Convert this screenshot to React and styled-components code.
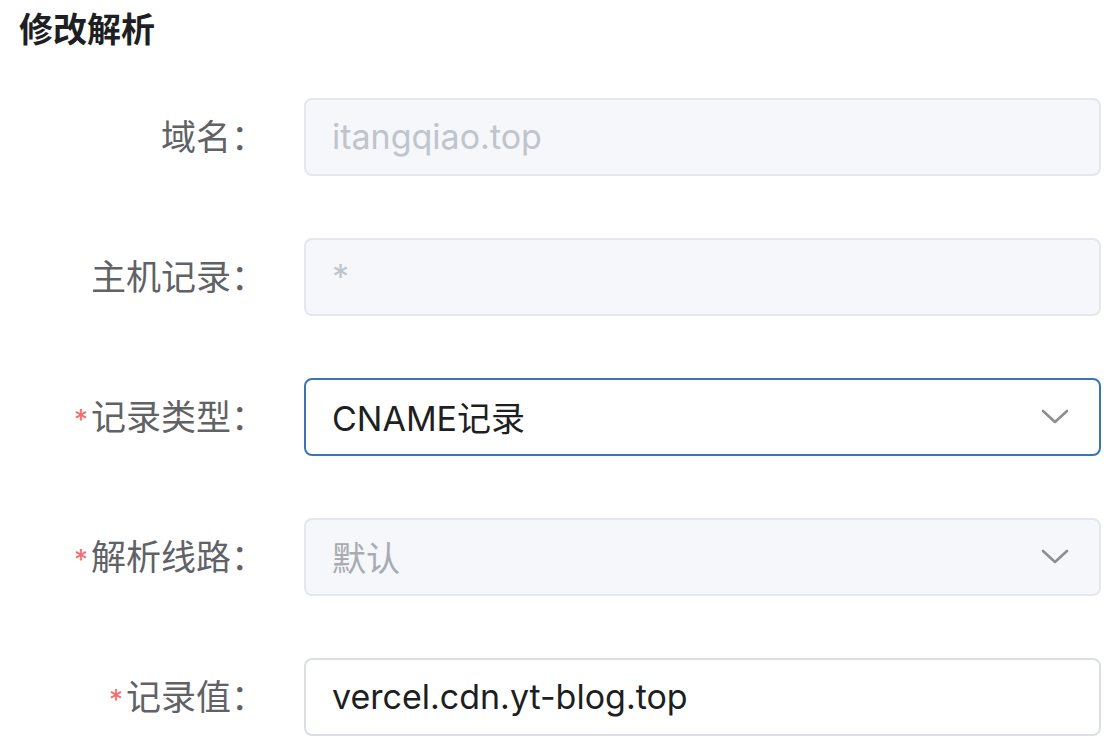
import React from 'react';
import styled, { createGlobalStyle } from 'styled-components';

const GlobalStyle = createGlobalStyle`
  html, body {
    margin: 0;
    padding: 0;
    background: #ffffff;
    font-family: Inter, "Noto Sans CJK SC", sans-serif;
  }
`;

const Page = styled.div`
  width: 1118px;
  height: 750px;
  overflow: hidden;
  box-sizing: border-box;
  padding: 8px 17px 0 19px;
`;

const Title = styled.h2`
  margin: 0;
  font-size: 34px;
  line-height: 44px;
  font-weight: 700;
  color: #1d1f23;
`;

const Form = styled.form`
  display: flex;
  flex-direction: column;
  gap: 62px;
  margin-top: 46px;
`;

const Row = styled.div`
  display: grid;
  grid-template-columns: 285px 1fr;
  align-items: center;
  height: 78px;
`;

const Label = styled.label`
  text-align: right;
  padding: 0 38px 5px 0;
  font-size: 35px;
  color: #606266;
  white-space: nowrap;
`;

const Star = styled.span`
  color: #f56c6c;
  margin-right: 3px;
  font-size: 28px;
`;

const Field = styled.div`
  display: flex;
  align-items: center;
  height: 78px;
  box-sizing: border-box;
  padding: 0 30px 0 26px;
  border-radius: 8px;
  border: 2px solid ${p => (p.$focused ? '#3b74b4' : p.$disabled ? '#e4e7ed' : '#dcdfe6')};
  background: ${p => (p.$disabled ? '#f5f7fa' : '#ffffff')};
  cursor: ${p => (p.$disabled ? 'not-allowed' : 'pointer')};
`;

const Value = styled.span`
  flex: 1;
  font-size: 34px;
  padding-bottom: 2px;
  color: ${p => (p.$muted ? '#c0c4cc' : p.$dim ? '#a8abb2' : '#1d1f23')};
`;

const Chevron = () => (
  <svg width="28" height="16" viewBox="0 0 28 16" fill="none">
    <path d="M2 2 L14 13 L26 2" stroke="#8c8e93" strokeWidth="2.6" strokeLinecap="round" strokeLinejoin="round" />
  </svg>
);

const rows = [
  { label: '域名', value: 'itangqiao.top', disabled: true, muted: true },
  { label: '主机记录', value: '*', disabled: true, muted: true },
  { label: '记录类型', value: 'CNAME记录', required: true, select: true, focused: true },
  { label: '解析线路', value: '默认', required: true, select: true, disabled: true, dim: true },
  { label: '记录值', value: 'vercel.cdn.yt-blog.top', required: true },
];

export default function App() {
  return (
    <>
      <GlobalStyle />
      <Page>
        <Title>修改解析</Title>
        <Form>
          {rows.map(r => (
            <Row key={r.label}>
              <Label>
                {r.required && <Star>*</Star>}
                {r.label}：
              </Label>
              <Field $disabled={r.disabled} $focused={r.focused}>
                <Value $muted={r.muted} $dim={r.dim}>{r.value}</Value>
                {r.select && <Chevron />}
              </Field>
            </Row>
          ))}
        </Form>
      </Page>
    </>
  );
}
